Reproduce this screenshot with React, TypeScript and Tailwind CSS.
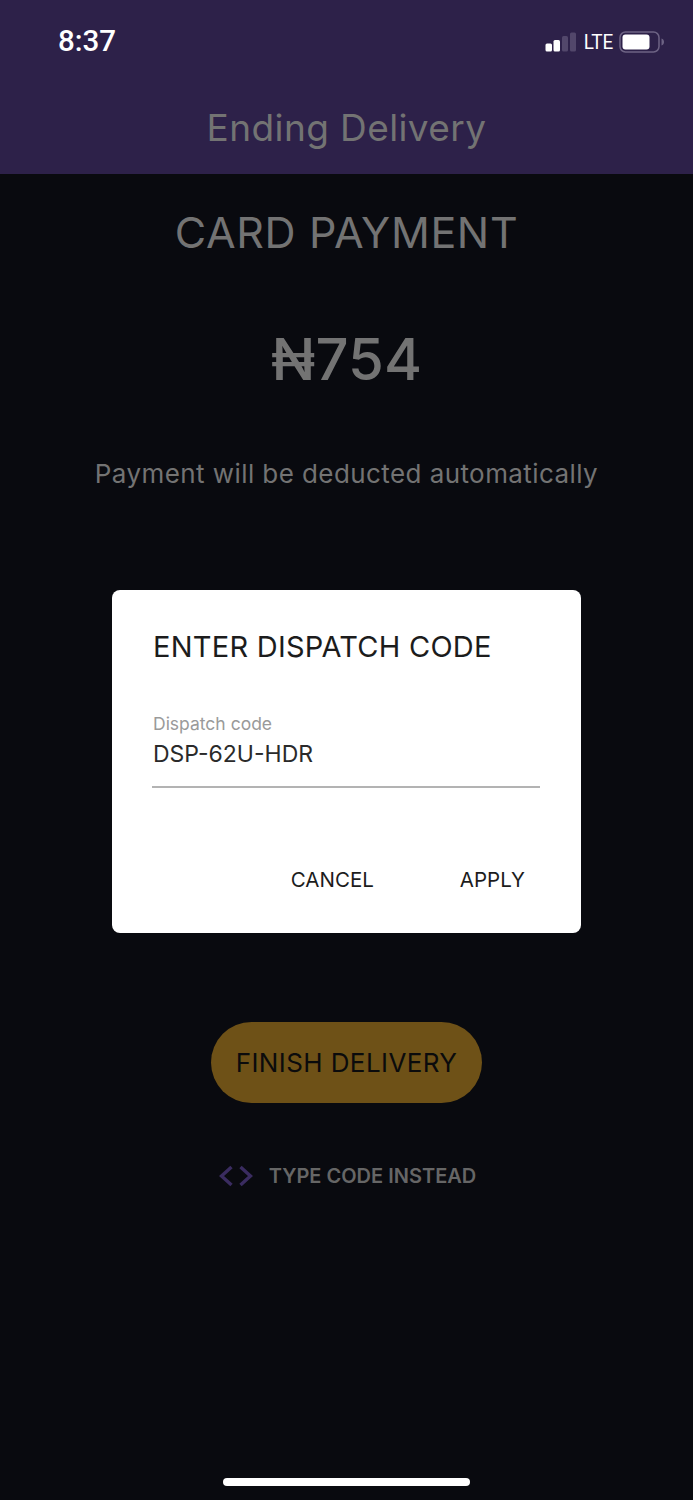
function StatusIcons() {
  return (
    <div className="flex items-center mt-[1px]">
      <svg width="32" height="20" viewBox="0 0 32 20" className="mr-[5px]">
        <rect x="0.5" y="11.5" width="6.5" height="8" rx="1.5" fill="#fff" />
        <rect x="8.5" y="8" width="6.5" height="11.5" rx="1.5" fill="#fff" />
        <rect x="17" y="4" width="6" height="15.5" rx="1.5" fill="#52476b" />
        <rect x="25" y="0.5" width="6" height="19" rx="1.5" fill="#52476b" />
      </svg>
      <span className="text-[21px] leading-none text-white font-['Roboto',sans-serif] scale-x-[0.9]">LTE</span>
      <svg width="46" height="22" viewBox="0 0 46 22" className="ml-[4px]">
        <rect x="1" y="1" width="39" height="20" rx="5.5" fill="none" stroke="#6d6384" strokeWidth="1.5" />
        <rect x="3.5" y="3.5" width="27" height="15" rx="3" fill="#fff" />
        <path d="M42.5 7.5c1.6.5 2.5 1.9 2.5 3.5s-.9 3-2.5 3.5z" fill="#6d6384" />
      </svg>
    </div>
  )
}

export default function App() {
  return (
    <div className="relative h-[1500px] w-[693px] overflow-hidden bg-[#090a0f] font-['Inter','Liberation_Sans',sans-serif]">
      <header className="h-[174px] bg-[#2d2149] flex flex-col">
        <div className="flex items-center justify-between pl-[58px] pr-[28px] pt-[25px] h-[58px]">
          <span className="text-[29.5px] leading-none font-medium text-white font-['Roboto',sans-serif]">8:37</span>
          <StatusIcons />
        </div>
        <h1 className="mt-[47px] text-center text-[37px] leading-[46px] tracking-[0.4px] text-[#737373]">Ending Delivery</h1>
      </header>

      <main className="flex flex-col items-center text-[#737373]">
        <h2 className="mt-[32px] text-[43px] leading-[52px] tracking-[0.65px]">CARD PAYMENT</h2>
        <div className="mt-[66px] text-[58px] leading-[70px] font-medium">₦754</div>
        <p className="mt-[63px] text-[26px] leading-[34px] tracking-[0.42px]">Payment will be deducted automatically</p>
        <button className="mt-[531px] h-[81px] w-[271px] rounded-full bg-[#6e5117] text-[26px] text-[#0b0b0c] tracking-[0.4px]">
          FINISH DELIVERY
        </button>
        <div className="mt-[59px] pl-[2px] flex items-center">
          <svg width="34" height="24" viewBox="0 0 34 24" fill="none" stroke="#3a2c60" strokeWidth="3.4">
            <path d="M12.5 3 2.5 12l10 9" />
            <path d="M21.5 3l10 9-10 9" />
          </svg>
          <span className="ml-[16px] text-[20px] leading-[28px] font-semibold text-[#666666]">TYPE CODE INSTEAD</span>
        </div>
      </main>

      {/* dispatch code dialog */}
      <div className="absolute left-[112px] top-[590px] h-[343px] w-[469px] rounded-[8px] bg-white px-[41px] pt-[39px]">
        <h3 className="text-[29px] leading-[36px] text-[#1c1c1c] tracking-[0.25px]">ENTER DISPATCH CODE</h3>
        <div className="mt-[48px] text-[17.5px] leading-[22px] text-[#9a9a9a]">Dispatch code</div>
        <div className="mt-[5px] text-[23px] leading-[28px] text-[#2a2a2a] pb-[18px] border-b-2 border-[#b3b3b3] -ml-[1px] pl-[1px]">DSP-62U-HDR</div>
        <div className="mt-[79px] flex justify-end text-[20.5px] leading-[26px] text-[#1c1c1c]">
          <button>CANCEL</button>
          <button className="ml-[86px] mr-[15px]">APPLY</button>
        </div>
      </div>

      <div className="absolute bottom-[14px] left-[223px] h-[8px] w-[247px] rounded-full bg-white" />
    </div>
  )
}
